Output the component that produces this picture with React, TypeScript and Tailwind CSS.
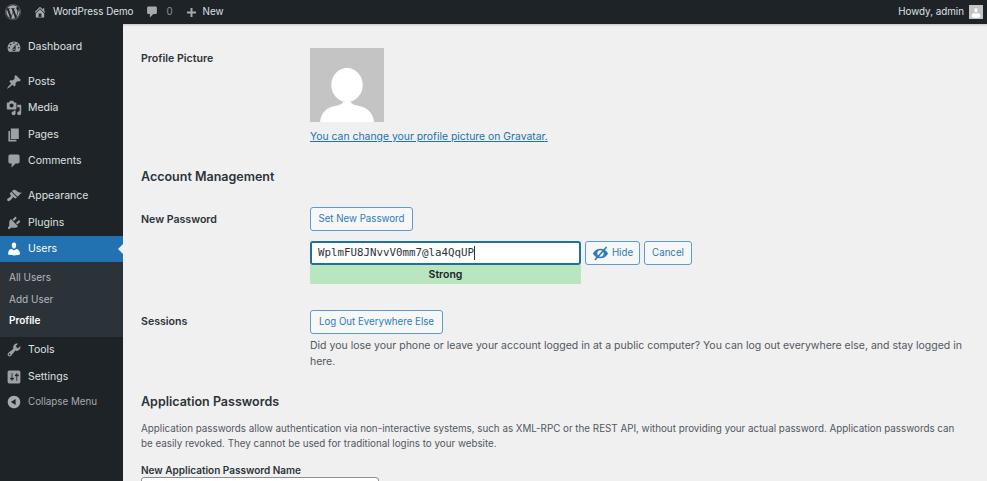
import { FaWordpress } from "react-icons/fa";

const icons: Record<string, string> = {
  dashboard: "M3.76 16h12.48c1.1-1.37 1.76-3.11 1.76-5 0-4.42-3.58-8-8-8s-8 3.58-8 8c0 1.89.66 3.63 1.76 5zM10 4c.55 0 1 .45 1 1s-.45 1-1 1-1-.45-1-1 .45-1 1-1zM6 6c.55 0 1 .45 1 1s-.45 1-1 1-1-.45-1-1 .45-1 1-1zm8 0c.55 0 1 .45 1 1s-.45 1-1 1-1-.45-1-1 .45-1 1-1zm-5.37 5.55L12 7v6c0 1.1-.9 2-2 2s-2-.9-2-2c0-.57.24-1.08.63-1.45zM4 10c.55 0 1 .45 1 1s-.45 1-1 1-1-.45-1-1 .45-1 1-1zm12 0c.55 0 1 .45 1 1s-.45 1-1 1-1-.45-1-1 .45-1 1-1zm-5 3c0-.55-.45-1-1-1s-1 .45-1 1 .45 1 1 1 1-.45 1-1z",
  posts: "M10.44 3.02l1.82-1.82 6.36 6.35-1.83 1.82c-1.05-.68-2.48-.57-3.41.36l-.75.75c-.92.93-1.04 2.35-.35 3.41l-1.83 1.82-2.41-2.41-2.8 2.79c-.42.42-3.38 2.71-3.8 2.29s1.86-3.39 2.28-3.81l2.79-2.79L4.1 9.36l1.83-1.82c1.05.69 2.48.57 3.4-.36l.75-.75c.93-.92 1.05-2.35.36-3.41z",
  media: "M13 11V4c0-.55-.45-1-1-1h-1.67L9 1H5L3.67 3H2c-.55 0-1 .45-1 1v7c0 .55.45 1 1 1h10c.55 0 1-.45 1-1zM7 4.5c1.38 0 2.5 1.12 2.5 2.5S8.38 9.5 7 9.5 4.5 8.38 4.5 7 5.62 4.5 7 4.5zM14 6h5v10.5c0 1.38-1.12 2.5-2.5 2.5S14 17.88 14 16.5s1.12-2.5 2.5-2.5c.17 0 .34.02.5.05V9h-3V6zm-4 8.05V13h2v3.5c0 1.38-1.12 2.5-2.5 2.5S7 17.88 7 16.5 8.12 14 9.5 14c.17 0 .34.02.5.05z",
  pages: "M6 15V2h10v13H6zm-1 1h8v2H3V5h2v11z",
  comments: "M5 2h10c1.1 0 2 .9 2 2v7c0 1.1-.9 2-2 2h-3l-5 5v-5H5c-1.1 0-2-.9-2-2V4c0-1.1.9-2 2-2z",
  appearance: "M14.48 11.06L7.41 3.99l1.5-1.5c.5-.56 2.3-.47 3.51.32 1.21.8 1.43 1.28 2.91 2.1 1.18.64 2.45 1.26 4.45.85zm-.71.71L6.7 4.7 4.93 6.47c-.39.39-.39 1.02 0 1.41l1.06 1.06c.39.39.39 1.03 0 1.42-.6.6-1.43 1.11-2.21 1.69-.35.26-.7.53-1.01.84C1.43 13.23.91 15.04 1.86 16c.94.95 2.76.43 4.08-.89.31-.31.58-.66.84-1.01.58-.78 1.09-1.61 1.69-2.21.39-.39 1.02-.39 1.41 0l1.06 1.06c.39.39 1.02.39 1.41 0z",
  plugins: "M13.11 4.36L9.87 7.6 8 5.73l3.24-3.24c.35-.34 1.05-.2 1.56.32.52.51.66 1.21.31 1.55zm-8 1.77l.91-1.12 9.01 9.01-1.19.84c-.71.71-2.63 1.16-3.82 1.16H6.14L4.9 17.26c-.59.59-1.54.59-2.12 0-.59-.58-.59-1.53 0-2.12l1.24-1.24v-3.88c0-1.13.4-3.19 1.09-3.89zm7.26 3.97l3.24-3.24c.34-.35 1.04-.21 1.55.31.52.51.66 1.21.31 1.55l-3.24 3.25z",
  users: "M10 9.25c-2.27 0-2.73-3.44-2.73-3.44C7 4.02 7.82 2 9.97 2c2.16 0 2.98 2.02 2.71 3.81 0 0-.41 3.44-2.68 3.44zm0 2.57L12.72 10c2.39 0 4.52 2.33 4.52 4.53v2.49s-3.65 1.13-7.24 1.13c-3.65 0-7.24-1.13-7.24-1.13v-2.49c0-2.25 1.94-4.48 4.47-4.48z",
  tools: "M16.68 9.77c-1.34 1.34-3.3 1.67-4.95.99l-5.41 6.52c-.99.99-2.59.99-3.58 0s-.99-2.59 0-3.57l6.52-5.42c-.68-1.65-.35-3.61.99-4.95 1.28-1.28 3.12-1.62 4.72-1.06l-2.89 2.89 2.82 2.82 2.86-2.87c.53 1.58.18 3.39-1.08 4.65zM3.81 16.21c.4.39 1.04.39 1.43 0 .4-.4.4-1.04 0-1.43-.39-.4-1.03-.4-1.43 0-.39.39-.39 1.03 0 1.43z",
  settings: "M18 16V4c0-1.1-.9-2-2-2H4c-1.1 0-2 .9-2 2v12c0 1.1.9 2 2 2h12c1.1 0 2-.9 2-2zM8 11h1c.55 0 1 .45 1 1s-.45 1-1 1H8v1.5c0 .28-.22.5-.5.5s-.5-.22-.5-.5V13H6c-.55 0-1-.45-1-1s.45-1 1-1h1V5.5c0-.28.22-.5.5-.5s.5.22.5.5V11zm5-2h-1c-.55 0-1-.45-1-1s.45-1 1-1h1V5.5c0-.28.22-.5.5-.5s.5.22.5.5V7h1c.55 0 1 .45 1 1s-.45 1-1 1h-1v5.5c0 .28-.22.5-.5.5s-.5-.22-.5-.5V9z",
  collapse: "M10 2.16c4.33 0 7.84 3.51 7.84 7.84s-3.51 7.84-7.84 7.84S2.16 14.33 2.16 10 5.71 2.16 10 2.16zm2 11.72V6.12L6.18 9.97z",
  home: "M16 8.5l1.53 1.53-1.06 1.06L10 4.62l-6.47 6.47-1.06-1.06L10 2.5l4 4v-2h2v4zm-6-2.46l6 5.99V18H4v-5.97zM12 17v-5H8v5h4z",
  plus: "M8.5 3h3v5.5H17v3h-5.5V17h-3v-5.5H3v-3h5.5z",
};

function Icon({ name, className }: { name: string; className: string }) {
  return (
    <svg viewBox="0 0 20 20" fill="currentColor" className={className}>
      <path d={icons[name]} />
    </svg>
  );
}

function MenuItem({ name, label, active }: { name: string; label: string; active?: boolean }) {
  return (
    <div className={`relative h-[26.4px] flex items-center pl-[6px] ${active ? "bg-[#2271b1] text-white" : "text-[#dfe1e3]"}`}>
      <Icon name={name} className={`w-4 h-4 ${active ? "text-white" : "text-[#9ca1a7]"}`} />
      <span className="ml-[6px]">{label}</span>
      {active && <span className="absolute right-0 top-[8px] border-y-[5px] border-r-[5px] border-y-transparent border-r-[#f0f0f1]" />}
    </div>
  );
}

function WpButton({ children, className = "" }: { children: React.ReactNode; className?: string }) {
  return (
    <button className={`h-6 rounded-[3px] border border-[#5f9bca] bg-[#f6f7f7] text-[#2f7ab8] text-[9.7px] whitespace-nowrap flex items-center justify-center ${className}`}>
      {children}
    </button>
  );
}

function Label({ children, className = "" }: { children: React.ReactNode; className?: string }) {
  return <div className={`w-[169px] shrink-0 text-[10.6px] font-semibold text-[#2c3338] ${className}`}>{children}</div>;
}

export default function App() {
  return (
    <div className="h-[481px] overflow-hidden flex flex-col text-[10.5px] bg-[#f0f0f1] font-['Inter',sans-serif]">
      <header className="h-6 shrink-0 bg-[#1d2327] flex items-center text-[9.8px] text-[#dfe1e3] pl-[5px] pr-[4px] shadow-[0_1px_2px_rgba(0,0,0,0.2)]">
        <FaWordpress className="w-[16px] h-[16px] text-[#a7aaad]" />
        <Icon name="home" className="w-[14px] h-[14px] ml-[12px] text-[#a7aaad]" />
        <span className="ml-[6px] pt-px">WordPress Demo</span>
        <Icon name="comments" className="w-[14px] h-[14px] ml-[12px] text-[#a7aaad]" />
        <span className="ml-[7px] pt-px text-[#8c8f94]">0</span>
        <Icon name="plus" className="w-[13px] h-[13px] ml-[12px] text-[#a7aaad]" />
        <span className="ml-[5px] pt-px">New</span>
        <span className="ml-auto pt-px">Howdy, admin</span>
        <div className="w-[14px] h-[14px] ml-[5px] bg-[#c4c4c4] flex items-end justify-center overflow-hidden">
          <Icon name="users" className="w-[12px] h-[12px] text-white" />
        </div>
      </header>
      <div className="flex flex-1 min-h-0">
        <aside className="w-[123px] shrink-0 bg-[#1d2327] pt-[9.4px]">
          <MenuItem name="dashboard" label="Dashboard" />
          <div className="h-[8.800px]" />
          <MenuItem name="posts" label="Posts" />
          <MenuItem name="media" label="Media" />
          <MenuItem name="pages" label="Pages" />
          <MenuItem name="comments" label="Comments" />
          <div className="h-[8.800px]" />
          <MenuItem name="appearance" label="Appearance" />
          <MenuItem name="plugins" label="Plugins" />
          <MenuItem name="users" label="Users" active />
          <div className="h-[75px] bg-[#2c3338] flex flex-col pt-[5px] pl-[9px] text-[10px] text-[#b4b9be]">
            <div className="h-[21.5px] flex items-center">All Users</div>
            <div className="h-[21.5px] flex items-center">Add User</div>
            <div className="h-[21.5px] flex items-center font-semibold text-white">Profile</div>
          </div>
          <MenuItem name="tools" label="Tools" />
          <MenuItem name="settings" label="Settings" />
          <div className="h-[24px] flex items-center pl-[6px] text-[#a7aaad] text-[9.8px]">
            <Icon name="collapse" className="w-4 h-4 text-[#a7aaad]" />
            <span className="ml-[6px]">Collapse Menu</span>
          </div>
        </aside>
        <main className="flex-1 min-w-0 pl-[18px] pr-[18px] pt-[24px] text-[#3c434a]">
          <div className="flex">
            <Label className="pt-[3px]">Profile Picture</Label>
            <div>
              <div className="w-[74px] h-[74px] bg-[#c4c4c4] overflow-hidden">
                <svg viewBox="0 0 74 74" className="w-[74px] h-[74px]" fill="#fff">
                  <ellipse cx="37" cy="37" rx="15.700" ry="17" />
                  <path d="M10 74c1-10 7-15 19-17 3-1 4-2 4-3h8c0 1 1 2 4 3 12 2 18 7 19 17z" />
                </svg>
              </div>
              <a className="block mt-[8px] text-[#2271b1] underline text-[10.4px] leading-[14px]">
                You can change your profile picture on Gravatar<span className="text-[#3c434a]">.</span>
              </a>
            </div>
          </div>

          <h2 className="mt-[25px] text-[12.500px] leading-[16px] font-semibold text-[#2c3338]">Account Management</h2>

          <div className="flex mt-[22px]">
            <Label className="pt-[5px]">New Password</Label>
            <div>
              <WpButton className="w-[103px]">Set New Password</WpButton>
              <div className="flex mt-[10px] gap-[4px]">
                <div className="w-[271px]">
                  <div className="h-6 rounded-[3px] border-2 border-[#1f6f9f] bg-white flex items-center pl-[6px] font-['DejaVu_Sans_Mono',monospace] text-[10.8px] text-[#2c3338]">
                    WplmFU8JNvvV0mm7@la4QqUP<span className="w-px h-[14px] bg-[#2c3338]" />
                  </div>
                  <div className="h-[19px] bg-[#b8e6bf] flex items-center justify-center font-semibold text-[#1d2327]">Strong</div>
                </div>
                <WpButton className="w-[55px]">
                  <svg viewBox="0 0 20 20" fill="currentColor" className="w-[17px] h-[17px] mr-[3px]">
                    <path fillRule="evenodd" d="M10 4.300c3.800 0 7 2.300 9 5.700-2 3.400-5.200 5.700-9 5.700S3 13.400 1 10c2-3.400 5.200-5.700 9-5.700zM10 6.300a3.700 3.700 0 1 0 0 7.400 3.700 3.700 0 0 0 0-7.400z" />
                    <path d="M16.500 1.800l1.400 1.200L4.200 18.200l-1.500-1.200z" />
                  </svg>
                  Hide
                </WpButton>
                <WpButton className="w-[48px]">Cancel</WpButton>
              </div>
            </div>
          </div>

          <div className="flex mt-[26px]">
            <Label className="pt-[4px]">Sessions</Label>
            <div className="flex-1">
              <WpButton className="w-[133px]">Log Out Everywhere Else</WpButton>
              <p className="mt-[4px] leading-[16px] text-[#50575e]">
                Did you lose your phone or leave your account logged in at a public computer? You can log out everywhere else, and stay logged in here.
              </p>
            </div>
          </div>

          <h2 className="mt-[24px] text-[12.500px] leading-[16px] font-semibold text-[#2c3338]">Application Passwords</h2>
          <p className="mt-[11px] mr-[8px] text-[9.8px] leading-[15px] text-[#50575e]">
            Application passwords allow authentication via non-interactive systems, such as XML-RPC or the REST API, without providing your actual password. Application passwords can be easily revoked. They cannot be used for traditional logins to your website.
          </p>
          <div className="mt-[12px] text-[10px] font-semibold text-[#2c3338] leading-[14px]">New Application Password Name</div>
          <div className="w-[238px] h-6 rounded-[3px] border border-[#8c8f94] bg-white" />
        </main>
      </div>
    </div>
  );
}
